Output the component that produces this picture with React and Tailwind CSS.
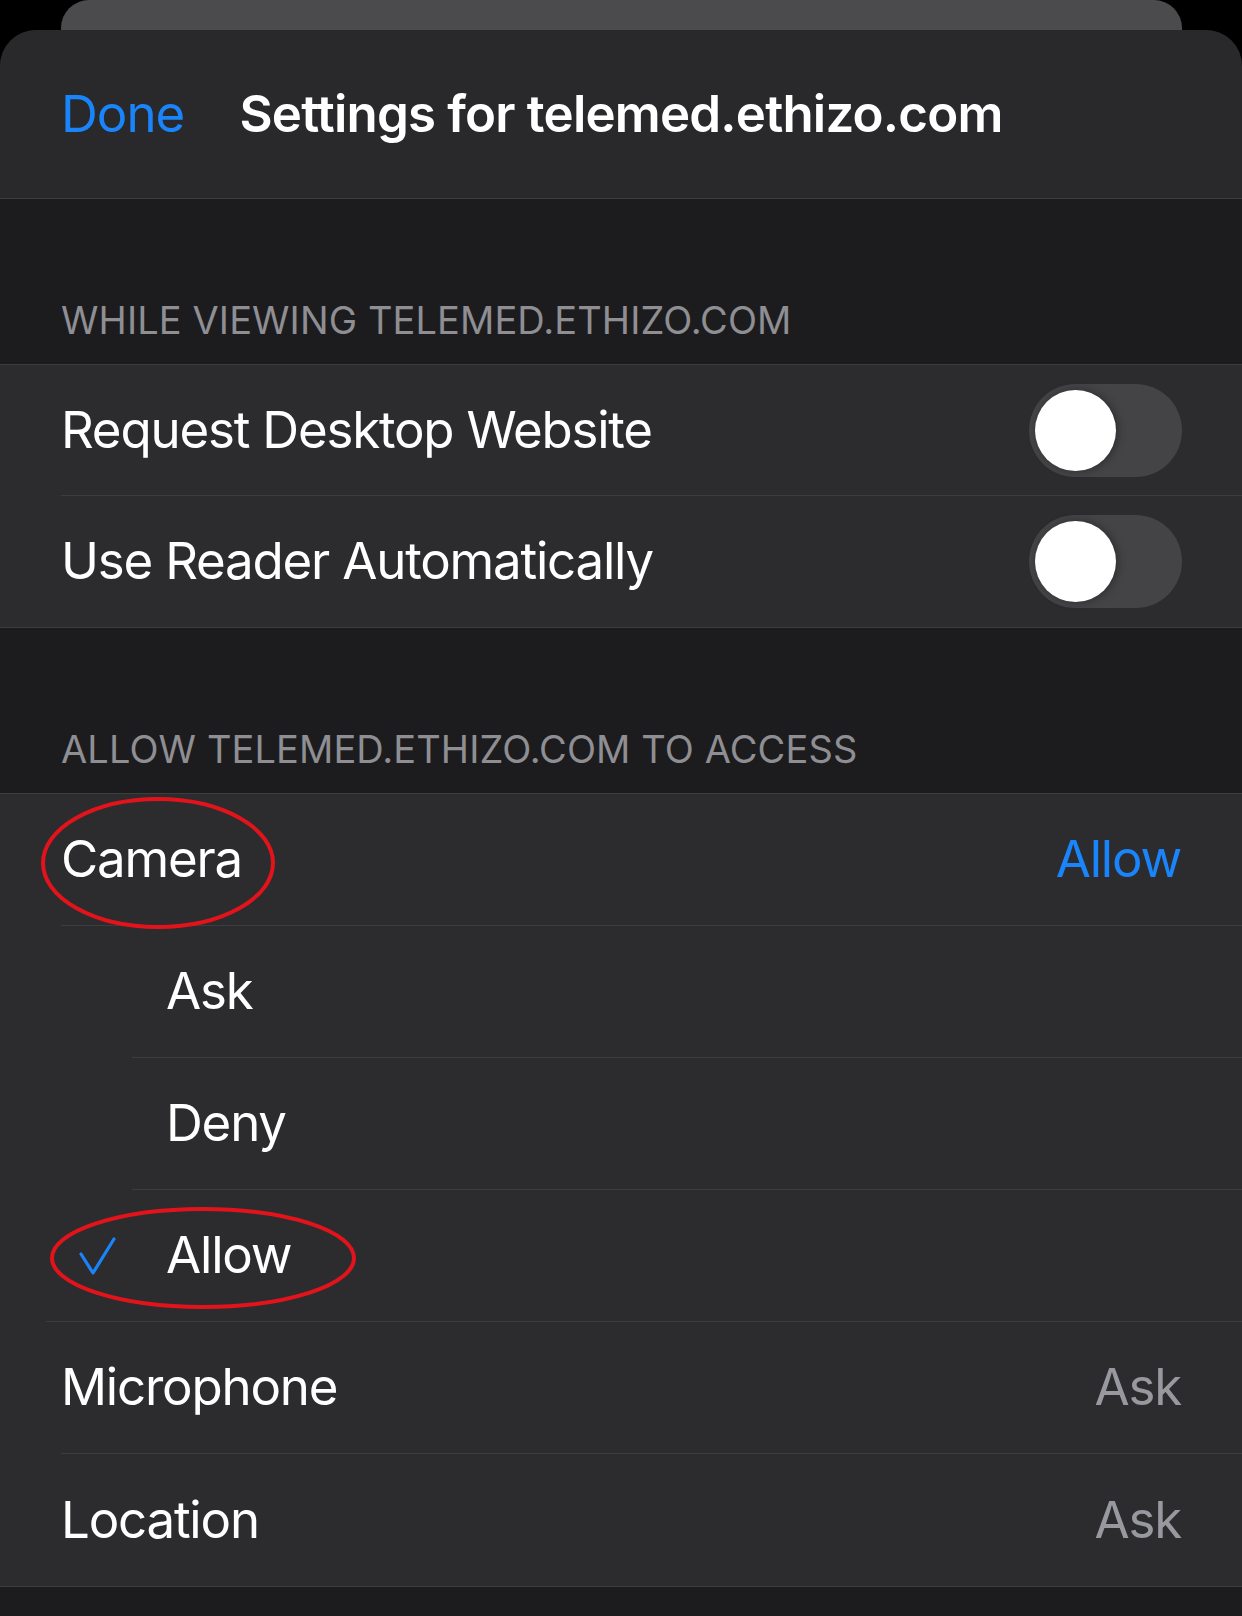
import React from "react";

const font = "font-['Inter','Liberation_Sans',sans-serif]";

const Toggle = () => (
  <div className="w-[153px] h-[93px] rounded-full bg-[#444447] flex items-center pl-[6px]">
    <div className="w-[81px] h-[81px] rounded-full bg-white shadow-[2px_0_8px_rgba(0,0,0,0.35)]" />
  </div>
);

const SectionHeader = ({ children }) => (
  <div className="h-[165px] flex flex-col justify-end pb-[21px] px-[61px]">
    <div className="text-[38px] leading-[46px] text-[#8e8e93] tracking-[0.1px]">{children}</div>
  </div>
);

const Check = () => (
  <svg width="38" height="40" viewBox="0 0 38 40" className="shrink-0">
    <path d="M2 18 L14 37 L35 3" fill="none" stroke="#1a84fb" strokeWidth="3.2" strokeLinecap="round" strokeLinejoin="round" />
  </svg>
);

export default function App() {
  return (
    <div className={`w-[1242px] h-[1616px] bg-black flex flex-col overflow-hidden ${font}`}>
      {/* card peeking behind the sheet */}
      <div className="h-[30px] shrink-0 ml-[61px] mr-[60px] bg-[#4b4b4d] rounded-t-[28px]" />

      <div className="flex-1 rounded-t-[36px] bg-[#1c1c1e] overflow-hidden">
        {/* Header */}
        <div className="h-[169px] bg-[#29292b] border-b border-[#3d3d40] grid grid-cols-[1fr_auto_1fr] items-center px-[61px]">
          <span className="text-[51px] text-[#1a84fb] tracking-[-1px]">Done</span>
          <span className="text-[51px] font-semibold text-white tracking-[-0.8px]">Settings for telemed.ethizo.com</span>
          <span />
        </div>

        <SectionHeader>WHILE VIEWING TELEMED.ETHIZO.COM</SectionHeader>
        <div className="bg-[#2c2c2e] border-y border-[#3d3d40] text-white text-[51px] tracking-[-1.2px]">
          <div className="pl-[61px]">
            <div className="h-[131px] flex items-center justify-between pr-[60px] border-b border-[#3d3d40]">
              <span>Request Desktop Website</span>
              <Toggle />
            </div>
          </div>
          <div className="pl-[61px]">
            <div className="h-[131px] flex items-center justify-between pr-[60px]">
              <span>Use Reader Automatically</span>
              <Toggle />
            </div>
          </div>
        </div>

        <SectionHeader>ALLOW TELEMED.ETHIZO.COM TO ACCESS</SectionHeader>
        <div className="relative bg-[#2c2c2e] border-y border-[#3d3d40] text-white text-[51px] tracking-[-1.2px]">
          <div className="pl-[61px]">
            <div className="h-[132px] flex items-center justify-between pr-[61px] border-b border-[#3d3d40]">
              <span>Camera</span>
              <span className="text-[#1a84fb]">Allow</span>
            </div>
          </div>
          <div className="pl-[132px]">
            <div className="h-[132px] flex items-center pl-[34px] border-b border-[#3d3d40]">
              <span>Ask</span>
            </div>
          </div>
          <div className="pl-[132px]">
            <div className="h-[132px] flex items-center pl-[34px] border-b border-[#3d3d40]">
              <span>Deny</span>
            </div>
          </div>
          <div className="pl-[46px]">
            <div className="h-[132px] flex items-center pl-[33px] border-b border-[#3d3d40]">
              <Check />
              <span className="ml-[49px]">Allow</span>
            </div>
          </div>
          <div className="pl-[61px]">
            <div className="h-[132px] flex items-center justify-between pr-[61px] border-b border-[#3d3d40]">
              <span>Microphone</span>
              <span className="text-[#98989f]">Ask</span>
            </div>
          </div>
          <div className="pl-[61px]">
            <div className="h-[132px] flex items-center justify-between pr-[61px]">
              <span>Location</span>
              <span className="text-[#98989f]">Ask</span>
            </div>
          </div>

          {/* red annotation circles */}
          <svg className="absolute left-[39px] top-[1px] pointer-events-none" width="238" height="136" viewBox="0 0 238 136">
            <ellipse cx="119" cy="68" rx="115" ry="64" fill="none" stroke="#e3131b" strokeWidth="4" />
          </svg>
          <svg className="absolute left-[48px] top-[411px] pointer-events-none" width="310" height="106" viewBox="0 0 310 106">
            <ellipse cx="155" cy="53" rx="151" ry="49" fill="none" stroke="#e3131b" strokeWidth="4" />
          </svg>
        </div>
      </div>
    </div>
  );
}
